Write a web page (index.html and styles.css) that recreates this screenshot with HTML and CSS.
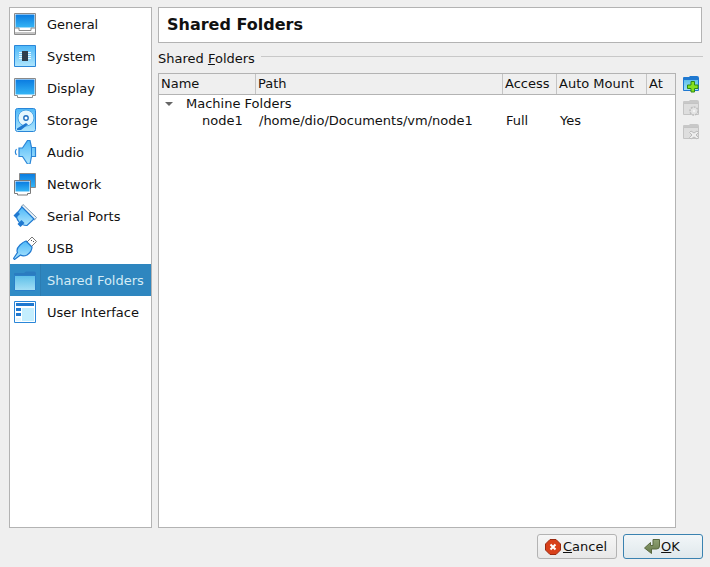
FILE: index.html
```html
<!DOCTYPE html>
<html lang="en">
<head>
<meta charset="UTF-8">
<title>Shared Folders</title>
<link rel="stylesheet" href="styles.css">
</head>
<body>
<svg class="defs" width="0" height="0">
  <defs>
    <linearGradient id="screen" x1="0" y1="0" x2="0" y2="1">
      <stop offset="0" stop-color="#0a7be0"/>
      <stop offset="1" stop-color="#35b5f5"/>
    </linearGradient>
    <linearGradient id="pale" x1="0" y1="0" x2="0" y2="1">
      <stop offset="0" stop-color="#4db8f8"/>
      <stop offset="1" stop-color="#b0e6fd"/>
    </linearGradient>
    <linearGradient id="folder" x1="0" y1="0" x2="0" y2="1">
      <stop offset="0" stop-color="#5cbfe8"/>
      <stop offset="1" stop-color="#a5dff5"/>
    </linearGradient>
    <linearGradient id="olive" x1="0" y1="0" x2="0" y2="1">
      <stop offset="0" stop-color="#8fa274"/>
      <stop offset="1" stop-color="#66784a"/>
    </linearGradient>
  </defs>
</svg>

<div class="dialog">
  <nav class="sidebar">
    <div class="nav-item">
      <svg class="nav-icon" viewBox="0 0 24 24">
        <path d="M1.500 1.500h21v21h-21z" fill="#fff" stroke="#8a8a8a"/>
        <path d="M2.500 2.500h19v13h-19z" fill="url(#screen)"/>
        <path d="M2 16h4v2.500h12V16h4M2 21h20" fill="none" stroke="#8a8a8a"/>
      </svg>
      <span>General</span>
    </div>
    <div class="nav-item">
      <svg class="nav-icon" viewBox="0 0 24 24">
        <path d="M1.500 1.500h21v21h-21z" fill="url(#pale)" stroke="#2a86d8"/>
        <path d="M6 8.500h12M6 10.500h12M6 12.500h12M6 14.500h12" stroke="#e8f8ff"/>
        <path d="M9 7h6v10H9z" fill="#2f3d4c"/>
      </svg>
      <span>System</span>
    </div>
    <div class="nav-item">
      <svg class="nav-icon" viewBox="0 0 24 24">
        <path d="M1.500 2.500h21v17h-3v2h-15v-2h-3z" fill="#fff" stroke="#8a8a8a"/>
        <path d="M2.500 3.500h19v15h-19z" fill="url(#screen)"/>
      </svg>
      <span>Display</span>
    </div>
    <div class="nav-item">
      <svg class="nav-icon" viewBox="0 0 24 24">
        <rect x="2.500" y="0.500" width="20" height="23" rx="2" fill="url(#pale)" stroke="#2a86d8"/>
        <circle cx="13" cy="10" r="8" fill="#e6f7fe" stroke="#4aa6e6"/>
        <circle cx="13" cy="10" r="2.200" fill="#fff" stroke="#1f6fc0" stroke-width="1.400"/>
        <path d="M4 20.500l9-5.500 2 1.500-7 5.500H4z" fill="#1f78d0"/>
      </svg>
      <span>Storage</span>
    </div>
    <div class="nav-item">
      <svg class="nav-icon" viewBox="0 0 24 24">
        <path d="M6 8h3.500l5-7.500h2.500l1.500 7H22.500v9H18.500l-1.500 7.500h-2.500l-5-7.500H6z" fill="url(#pale)" stroke="#2a86d8" stroke-width="1.200"/>
        <path d="M18.500 7.500v9" stroke="#2a86d8"/>
        <path d="M3.500 9c-1.500 2-1.500 4 0 6" fill="none" stroke="#2a86d8" stroke-width="1.200"/>
      </svg>
      <span>Audio</span>
    </div>
    <div class="nav-item">
      <svg class="nav-icon" viewBox="0 0 24 24">
        <path d="M6.500 1.500h16v14h-16z" fill="url(#screen)" stroke="#8a8a8a"/>
        <path d="M1.500 8.500h16v13h-3v1.500h-10v-1.500h-3z" fill="#fff" stroke="#7a7a7a"/>
        <path d="M2.500 9.500h14v10h-14z" fill="url(#screen)"/>
      </svg>
      <span>Network</span>
    </div>
    <div class="nav-item">
      <svg class="nav-icon" viewBox="0 0 24 24">
        <path d="M10 .5l13.500 13-2 2.500L8 3z" fill="#eef5fa" stroke="#7f9ab0"/>
        <path d="M9 3l12 12-7 6.500c-3 0-6-1-8-3.500s-3-5-2.500-8z" fill="url(#pale)" stroke="#1f78d0" stroke-width="1.200"/>
        <path d="M4.500 7.500L.5 11.500 3 14l4-4zM8.500 16l-4 4 3 3 4-4z" fill="#1f78d0"/>
      </svg>
      <span>Serial Ports</span>
    </div>
    <div class="nav-item">
      <svg class="nav-icon" viewBox="0 0 24 24">
        <path d="M14 6l5-5 4.500 4.500-5 5z" fill="#fff" stroke="#777"/>
        <path d="M18 4l1 1M20 6l1-1" stroke="#555"/>
        <path d="M13 5l6 6c0 3-2 6-5 8-3 1.500-5 1-6.500 0L1.500 23.500l-1-1 4-6c-1-2 0-5 2.500-7.500 2-2 4-3.500 6-4z" fill="url(#pale)" stroke="#1f78d0" stroke-width="1.200"/>
      </svg>
      <span>USB</span>
    </div>
    <div class="nav-item is-selected">
      <svg class="nav-icon" viewBox="0 0 24 24">
        <path d="M1 6q0-1 1-1h9l2-1.500h8q2 0 2 2V21H1z" fill="#2a7cc0"/>
        <path d="M1.500 7.500h21V22.500h-21z" fill="url(#folder)" stroke="#2a80c8"/>
      </svg>
      <span>Shared Folders</span>
    </div>
    <div class="nav-item">
      <svg class="nav-icon" viewBox="0 0 24 24">
        <path d="M1.500 1.500h21v21h-21z" fill="#fff" stroke="#2a86d8"/>
        <path d="M3 3h18v3H3zM3 8h5v3H3zM3 13h5v3H3z" fill="#1f78d0"/>
        <path d="M9 8h12v13H9z" fill="#c4eefe"/>
        <path d="M3 18h5v3H3z" fill="#e6f7fe"/>
      </svg>
      <span>User Interface</span>
    </div>
  </nav>

  <main class="content">
    <h1 class="page-title">Shared Folders</h1>

    <div class="group-title">
      <span>Shared <u>F</u>olders</span>
      <i class="group-line"></i>
    </div>

    <div class="folders">
      <div class="tree">
        <div class="tree-row tree-head">
          <div>Name</div>
          <div>Path</div>
          <div>Access</div>
          <div>Auto Mount</div>
          <div>At</div>
        </div>
        <div class="tree-row tree-parent">
          <div class="tree-parent-name"><i class="caret"></i>Machine Folders</div>
        </div>
        <div class="tree-row">
          <div class="tree-child">node1</div>
          <div>/home/dio/Documents/vm/node1</div>
          <div>Full</div>
          <div>Yes</div>
          <div></div>
        </div>
      </div>

      <div class="toolbar">
        <svg class="tool-icon" viewBox="0 0 18 18">
          <path d="M1 3q0-1 1-1h5l1-1h7q2 0 2 2v12H1z" fill="#1f78d0"/>
          <path d="M1.500 4.500h15v11h-15z" fill="url(#folder)" stroke="#1f78d0"/>
          <path d="M9 6.500h3.500V10H16v3.500h-3.500V17H9v-3.500H5.500V10H9z" fill="#84e01e" stroke="#2f8a12"/>
        </svg>
        <svg class="tool-icon" viewBox="0 0 18 18">
          <path d="M1 3q0-1 1-1h5l1-1h7q2 0 2 2v12H1z" fill="#c8c8c8"/>
          <path d="M1.500 4.500h15v11h-15z" fill="#dedede" stroke="#c4c4c4"/>
          <circle cx="12" cy="12" r="4" fill="#e4e4e4" stroke="#bdbdbd" stroke-width="1.500" stroke-dasharray="2 1"/>
          <circle cx="12" cy="12" r="1.200" fill="#f4f4f4"/>
        </svg>
        <svg class="tool-icon" viewBox="0 0 18 18">
          <path d="M1 3q0-1 1-1h5l1-1h7q2 0 2 2v12H1z" fill="#c8c8c8"/>
          <path d="M1.500 4.500h15v11h-15z" fill="#dedede" stroke="#c4c4c4"/>
          <path d="M9 8l3 2 3-2 1.500 1.500-2.500 2.500 2.500 2.500L15 16l-3-2-3 2-1.500-1.500L10 12 7.500 9.500z" fill="#eee" stroke="#bbb"/>
        </svg>
      </div>
    </div>
  </main>

  <footer class="buttons">
    <button class="btn" type="button">
      <svg class="btn-icon" viewBox="0 0 16 16">
        <path d="M5 .5h6L15.500 5v6L11 15.500H5L.5 11V5z" fill="#d8401a" stroke="#9a2a10"/>
        <path d="M5.500 5.500l5 5M10.500 5.500l-5 5" stroke="#fff" stroke-width="2"/>
      </svg>
      <span><u>C</u>ancel</span>
    </button>
    <button class="btn btn-default" type="button">
      <svg class="btn-icon" viewBox="0 0 16 16">
        <path d="M9 .5h6.500V7q0 3-3 3H7.500v4.500L.5 9 6.500 3.500V6.500H9z" fill="url(#olive)" stroke="#59683f"/>
      </svg>
      <span><u>O</u>K</span>
    </button>
  </footer>
</div>
</body>
</html>
```

FILE: styles.css
```css
html, body {
  margin: 0;
  padding: 0;
}
body {
  width: 710px;
  height: 567px;
  overflow: hidden;
  background: #efefef;
  color: #111;
  font-family: 'DejaVu Sans', sans-serif;
  font-size: 13px;
}
.defs {
  display: block;
  height: 0;
}

.dialog {
  display: grid;
  grid-template-columns: 143px 545px;
  grid-template-rows: 521px 25px;
  column-gap: 6px;
  row-gap: 6px;
  padding: 7px 7px 0 9px;
}

/* left list */
.sidebar {
  box-sizing: border-box;
  background: #fff;
  border: 1px solid #b3b3b3;
}
.nav-item {
  display: flex;
  align-items: center;
  height: 32px;
  padding-left: 3px;
}
.nav-item span {
  display: flex;
  align-items: center;
  flex: 1;
  height: 32px;
  margin-left: 3px;
  padding-left: 7px;
}
.nav-icon {
  flex: none;
  width: 24px;
  height: 24px;
}
.is-selected {
  background: #308cc6;
  color: #d4ecf6;
}
.nav-item.is-selected span {
  background: #2e86bf;
  border-left: 1px solid #2b7db3;
  padding-left: 6px;
}

/* right side */
.content {
  display: flex;
  flex-direction: column;
  min-width: 0;
}
.page-title {
  box-sizing: border-box;
  height: 36px;
  margin: 0 1px 0 0;
  padding-left: 8px;
  background: #fff;
  border: 1px solid #b3b3b3;
  font-size: 16px;
  font-weight: bold;
  line-height: 34px;
}
.group-title {
  display: flex;
  align-items: center;
  height: 16px;
  margin-top: 7px;
  margin-bottom: 7px;
}
.group-line {
  flex: 1;
  height: 1px;
  margin-left: 6px;
  margin-bottom: 3px;
  background: #c8c8c8;
}

.folders {
  display: flex;
  flex: 1;
  min-height: 0;
}
.tree {
  box-sizing: border-box;
  width: 518px;
  background: #fff;
  border: 1px solid #b3b3b3;
}
.tree-row {
  display: grid;
  grid-template-columns: 97px 247px 54px 90px 28px;
  height: 17px;
  line-height: 17px;
  white-space: nowrap;
}
.tree-row > div {
  padding-left: 3px;
}
.tree-head {
  box-sizing: border-box;
  height: 21px;
  line-height: 20px;
  background: #efefef;
  border-bottom: 1px solid #b3b3b3;
}
.tree-row.tree-head > div {
  padding-left: 2px;
  border-right: 1px solid #c4c4c4;
}
.tree-row.tree-head > div:last-child {
  border-right: 0;
}
.tree-parent {
  display: block;
}
.tree-row > .tree-parent-name {
  display: flex;
  align-items: center;
  padding-left: 6px;
}
.caret {
  width: 0;
  height: 0;
  margin-right: 13px;
  border-left: 4px solid transparent;
  border-right: 4px solid transparent;
  border-top: 4px solid #666;
}
.tree-row > .tree-child {
  padding-left: 43px;
}

.toolbar {
  display: flex;
  flex-direction: column;
  gap: 6px;
  padding: 2px 0 0 6px;
}
.tool-icon {
  display: block;
  width: 18px;
  height: 18px;
}

/* bottom buttons */
.buttons {
  grid-column: 1 / 3;
  display: flex;
  justify-content: flex-end;
  gap: 6px;
}
.btn {
  display: flex;
  align-items: center;
  justify-content: center;
  gap: 2px;
  box-sizing: border-box;
  width: 80px;
  height: 25px;
  padding: 0 2px 0 0;
  background: linear-gradient(#f6f6f6, #e8e8e8);
  border: 1px solid #b3b3b3;
  border-radius: 3px;
  color: #111;
  font-family: inherit;
  font-size: 13px;
}
.btn-default {
  gap: 1px;
  border-color: #3a82b0;
  background: linear-gradient(#f2f6f8, #dfe8ec);
}
.btn-icon {
  width: 16px;
  height: 16px;
}
```
